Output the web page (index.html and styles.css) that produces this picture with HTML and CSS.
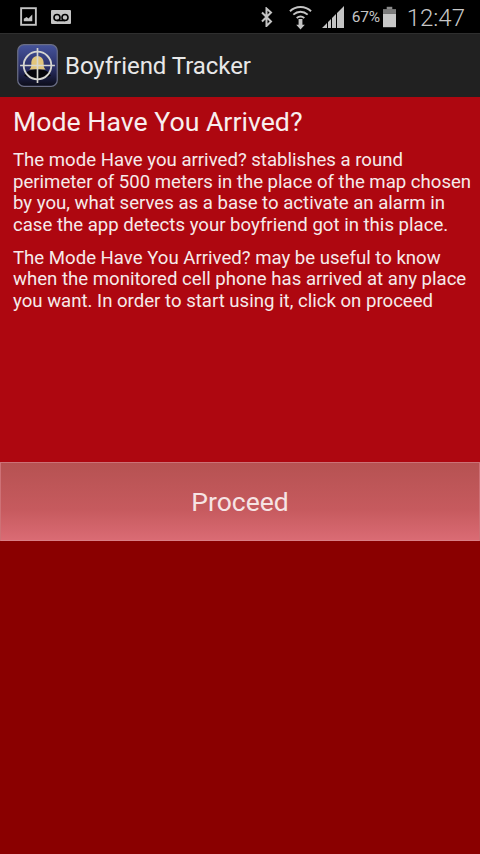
FILE: index.html
```html
<!DOCTYPE html>
<html lang="en">
<head>
<meta charset="utf-8">
<title>Boyfriend Tracker</title>
<link rel="stylesheet" href="styles.css">
</head>
<body>
<div class="status">
  <div class="status-left">
    <svg class="ic-pic" viewBox="0 0 18 20"><rect x="1.2" y="1.2" width="15.6" height="17.6" fill="none" stroke="#c4c4c4" stroke-width="2"/><path d="M4 15v-2.5l3-2 2 1.5 4-4v7z" fill="#c4c4c4"/></svg>
    <svg class="ic-vm" viewBox="0 0 20 14"><rect x="0" y="0" width="20" height="14" rx="1" fill="#c4c4c4"/><circle cx="6" cy="7.5" r="3" fill="none" stroke="#000" stroke-width="1.6"/><circle cx="14" cy="7.5" r="3" fill="none" stroke="#000" stroke-width="1.6"/><path d="M6 10.5h8" stroke="#000" stroke-width="1.6"/></svg>
  </div>
  <div class="status-right">
    <svg class="ic-bt" viewBox="0 0 14 20"><path d="M2 5.500l9 9-4.500 4.500V1.500L11 5.500l-9 9" fill="none" stroke="#c4c4c4" stroke-width="2"/></svg>
    <svg class="ic-wifi" viewBox="0 0 24 26"><path d="M1 7c6-6 16-6 22 0M4.500 10.500c4.500-4 10.500-4 15 0M8 14c2.500-2 5.500-2 8 0" fill="none" stroke="#c4c4c4" stroke-width="2"/><path d="M10 15h4v6h2.500L12 26l-4.500-5H10z" fill="#c4c4c4"/></svg>
    <svg class="ic-sig" viewBox="0 0 22 23"><path d="M0 23l5-5v5zM6 23v-6l3-3v9zM10 23V13l4-4v14zM15 23V8l7-7v22z" fill="#c4c4c4"/></svg>
    <span class="pct">67%</span>
    <svg class="ic-bat" viewBox="0 0 14 22"><rect x="4" y="0" width="6" height="3" fill="#8a8a8a"/><rect x="0" y="2.500" width="14" height="5" fill="#7c7c7c"/><rect x="0" y="7.500" width="14" height="14.500" fill="#c8c8c8"/></svg>
    <span class="clock">12:47</span>
  </div>
</div>
<header class="bar">
  <svg class="logo" viewBox="0 0 40 42">
    <defs>
      <linearGradient id="lg" x1="0" y1="0" x2="0" y2="1"><stop offset="0" stop-color="#46549c"/><stop offset=".55" stop-color="#2a2f66"/><stop offset="1" stop-color="#0b0c18"/></linearGradient>
    </defs>
    <rect x=".7" y=".7" width="38.600" height="40.600" rx="6" fill="url(#lg)" stroke="#6a6e86" stroke-width="1.200"/>
    <path d="M14 20c-1-11 13-11 12 0 0 3 1 4 2 5H12c1-1 2-2 2-5z" fill="#e2c67c"/>
    <path d="M7 31c2-5 7-6 13-6s11 1 13 6c-7 4-19 4-26 0z" fill="#05050a"/>
    <circle cx="20" cy="21" r="13.500" fill="none" stroke="#d6d6d0" stroke-width="1.800"/>
    <path d="M20 4v34M3 21h34" stroke="#d6d6d0" stroke-width="1.600"/>
  </svg>
  <span class="title">Boyfriend Tracker</span>
</header>
<main class="content">
  <h1 class="heading">Mode Have You Arrived?</h1>
  <p class="para">The mode Have you arrived? stablishes a round perimeter of 500 meters in the place of the map chosen by you, what serves as a base to activate an alarm in case the app detects your boyfriend got in this place.</p>
  <p class="para">The Mode Have You Arrived? may be useful to know when the monitored cell phone has arrived at any place you want. In order to start using it, click on proceed</p>
</main>
<div class="proceed">Proceed</div>
<div class="bottom"></div>
</body>
</html>
```
FILE: styles.css
```css
* { box-sizing: border-box; }
html, body { margin: 0; padding: 0; }
body {
  width: 480px;
  height: 854px;
  overflow: hidden;
  display: flex;
  flex-direction: column;
  font-family: Roboto, "Liberation Sans", sans-serif;
  background: #8a0000;
}
.status {
  height: 33px;
  background: #000;
  display: flex;
  justify-content: space-between;
  align-items: center;
  padding: 0 15px 0 20px;
}
.status-left, .status-right { display: flex; align-items: center; }
.ic-pic { width: 17px; height: 19px; }
.ic-vm { width: 20px; height: 14px; margin-left: 14px; }
.ic-bt { width: 14px; height: 20px; }
.ic-wifi { width: 23px; height: 26px; margin-left: 15px; }
.ic-sig { width: 22px; height: 23px; margin-left: 10px; }
.pct { color: #c4c4c4; font-size: 15.500px; margin-left: 8px; letter-spacing: -0.3px; }
.ic-bat { width: 13px; height: 22px; margin-left: 3px; }
.clock { color: #c8c8c8; font-size: 24px; font-weight: 300; margin-left: 11px; padding-top: 2px; }
.bar {
  height: 64px;
  background: #212121;
  border-top: 1px solid #2f2f2f;
  display: flex;
  align-items: center;
  padding-left: 17px;
}
.logo { width: 41px; height: 43px; }
.title { color: #e8e8e8; font-size: 24px; margin-left: 7px; letter-spacing: -0.05px; }
.content {
  height: 365px;
  background: #ae0710;
  padding: 10px 6px 0 13px;
  color: #f6eaea;
}
.heading { margin: 0 0 13px; font-size: 26.700px; font-weight: 400; line-height: 30px; color: #f8eeee; }
.para { margin: 0 0 11.500px; font-size: 18.600px; line-height: 21.600px; }
.proceed {
  height: 79px;
  background: linear-gradient(#b65252, #c65a5e 60%, #da6b74);
  border: 1px solid #cd7176;
  border-bottom-color: #d97f86;
  color: #f6e4e4;
  font-size: 26.500px;
  display: flex;
  align-items: center;
  justify-content: center;
}
.bottom { flex: 1; background: #8a0000; }
```
